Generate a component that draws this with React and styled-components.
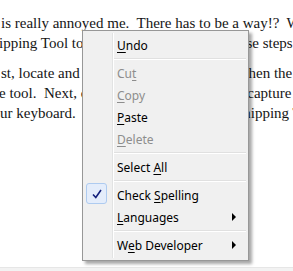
import React from 'react';
import styled, { createGlobalStyle } from 'styled-components';

const Global = createGlobalStyle`
  html, body {
    margin: 0;
    padding: 0;
    background: #fff;
  }
`;

// Page behind the popup
const Page = styled.div`
  position: relative;
  width: 293px;
  height: 271px;
  overflow: hidden;
  display: flex;
  flex-direction: column;
  background: #fff;
`;

const Doc = styled.div`
  flex: 1;
  padding-top: 13px;
  font-family: 'Liberation Serif', serif;
  font-size: 15px;
  color: #151515;
`;

const Para = styled.div`
  margin-bottom: 10px;
`;

const Line = styled.div`
  white-space: pre;
  line-height: 20px;
  margin-left: ${({ shift }) => shift || 0}px;
`;

const Footer = styled.div`
  height: 3px;
  background: #f2f2f2;
  border-top: 1px solid #e6e6e6;
`;

// Context menu
const Menu = styled.div`
  position: absolute;
  left: 82px;
  top: 30px;
  width: 165px;
  height: 226px;
  padding: 3px 0 0 0;
  box-sizing: content-box;
  border: 1px solid #979797;
  background: #f0f0f0;
  box-shadow: 3px 3px 3px rgba(0, 0, 0, 0.35);
  font-family: 'Noto Sans', sans-serif;
  font-size: 12px;
  color: #000;
  display: flex;
  flex-direction: column;

  &::before {
    content: '';
    position: absolute;
    top: 2px;
    bottom: 2px;
    left: 29px;
    width: 1px;
    background: #e2e3e3;
    border-right: 1px solid #fff;
  }
`;

const Item = styled.div`
  position: relative;
  height: 22px;
  display: flex;
  align-items: center;
  padding-left: 34px;
  color: ${({ disabled }) => (disabled ? '#8d8d8d' : '#000')};

  u {
    text-decoration: underline;
    text-underline-offset: 2px;
  }
`;

const Sep = styled.div`
  height: 6px;
  display: flex;
  align-items: center;
  margin-left: 31px;
  margin-right: 2px;

  &::after {
    content: '';
    flex: 1;
    height: 1px;
    background: #e0e0e0;
    border-bottom: 1px solid #fff;
  }
`;

const Check = styled.div`
  position: absolute;
  left: 3px;
  top: -1px;
  width: 19px;
  height: 19px;
  border: 1px solid #aecbf0;
  border-radius: 3px;
  background: #e4edfb;
  display: flex;
  align-items: center;
  justify-content: center;
`;

const Arrow = styled.div`
  position: absolute;
  right: 12px;
  top: 7px;
  width: 0;
  height: 0;
  border-top: 4px solid transparent;
  border-bottom: 4px solid transparent;
  border-left: 4px solid #000;
`;

export default function App() {
  return (
    <Page>
      <Global />
      <Doc>
        <Para>
          <Line shift={1}>is really annoyed me.  There has to be a way!?  With</Line>
          <Line shift={-1}>ipping Tool to capture menus. Follow these steps</Line>
        </Para>
        <Para>
          <Line shift={1}>st, locate and open the Snipping Tool.  When the</Line>
          <Line shift={-1}>e tool.  Next, click the menu you want to capture</Line>
          <Line>ur keyboard.  Now press Esc, open the Snipping Tool</Line>
        </Para>
      </Doc>
      <Footer />

      <Menu>
        <Item><span><u>U</u>ndo</span></Item>
        <Sep />
        <Item disabled><span>Cu<u>t</u></span></Item>
        <Item disabled><span><u>C</u>opy</span></Item>
        <Item><span><u>P</u>aste</span></Item>
        <Item disabled><span><u>D</u>elete</span></Item>
        <Sep />
        <Item><span>Select <u>A</u>ll</span></Item>
        <Sep />
        <Item>
          <Check>
            <svg width="12" height="12" viewBox="0 0 12 12">
              <path d="M2 6.5 L4.8 9.5 L10 2" fill="none" stroke="#14207c" strokeWidth="1.6" />
            </svg>
          </Check>
          <span>Check <u>S</u>pelling</span>
        </Item>
        <Item>
          <span><u>L</u>anguages</span>
          <Arrow />
        </Item>
        <Sep />
        <Item>
          <span>W<u>e</u>b Developer</span>
          <Arrow />
        </Item>
      </Menu>
    </Page>
  );
}
